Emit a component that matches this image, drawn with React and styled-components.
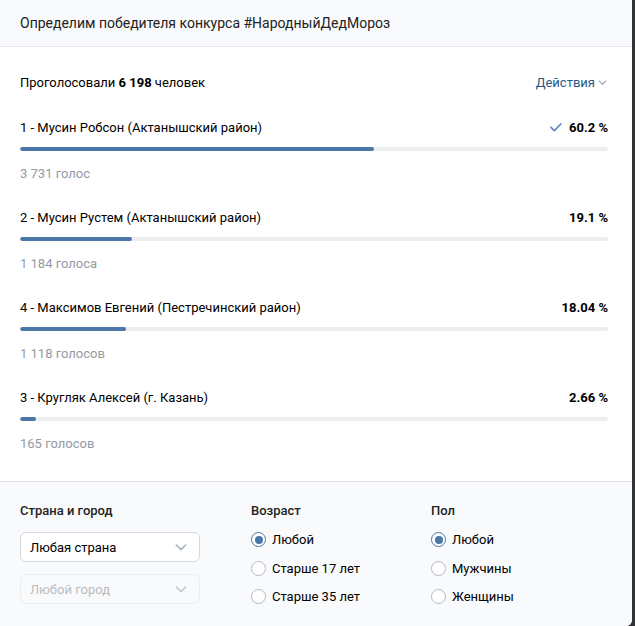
import React from 'react';
import styled, { createGlobalStyle } from 'styled-components';

const GlobalStyle = createGlobalStyle`
	body {
		margin: 0;
		background: #333436;
		font-family: Roboto, 'Liberation Sans', sans-serif;
		-webkit-font-smoothing: antialiased;
	}
`;

const answers = [
	{ title: '1 - Мусин Робсон (Актанышский район)', percent: 60.2, votes: '3 731 голос', mine: true },
	{ title: '2 - Мусин Рустем (Актанышский район)', percent: 19.1, votes: '1 184 голоса' },
	{ title: '4 - Максимов Евгений (Пестречинский район)', percent: 18.04, votes: '1 118 голосов' },
	{ title: '3 - Кругляк Алексей (г. Казань)', percent: 2.66, votes: '165 голосов' },
];

function Chevron({ color = '#99a2ad', size = 12 }) {
	return (
		<svg width={size} height={size} viewBox='0 0 12 12' fill='none'>
			<path d='M2.5 4.5 6 8l3.5-3.5' stroke={color} strokeWidth='1.3' strokeLinecap='round' strokeLinejoin='round' />
		</svg>
	);
}

function Check() {
	return (
		<svg width='14' height='14' viewBox='0 0 14 14' fill='none'>
			<path d='M2 7.4 5.4 10.6 12 3.8' stroke='#5c85b8' strokeWidth='1.6' strokeLinecap='round' strokeLinejoin='round' />
		</svg>
	);
}

function App() {
	return (
		<>
			<GlobalStyle />
			<Box>
				<Header>Определим победителя конкурса #НародныйДедМороз</Header>
				<Body>
					<Summary>
						<span>
							Проголосовали <b>6 198</b> человек
						</span>
						<Actions>
							Действия <Chevron size={11} />
						</Actions>
					</Summary>
					{answers.map((a) => (
						<Answer key={a.title}>
							<AnswerHead>
								<span>{a.title}</span>
								<Percent>
									{a.mine && <Check />}
									{a.percent} %
								</Percent>
							</AnswerHead>
							<Track>
								<Fill style={{ width: `${a.percent}%` }} />
							</Track>
							<Votes>{a.votes}</Votes>
						</Answer>
					))}
				</Body>
				<Filters>
					<Column>
						<Label>Страна и город</Label>
						<Select>
							Любая страна <Chevron color='#aeb7c2' size={16} />
						</Select>
						<Select disabled>
							Любой город <Chevron color='#c5cbd2' size={16} />
						</Select>
					</Column>
					<Column>
						<Label>Возраст</Label>
						<Radio checked>Любой</Radio>
						<Radio>Старше 17 лет</Radio>
						<Radio>Старше 35 лет</Radio>
					</Column>
					<Column>
						<Label>Пол</Label>
						<Radio checked>Любой</Radio>
						<Radio>Мужчины</Radio>
						<Radio>Женщины</Radio>
					</Column>
				</Filters>
			</Box>
		</>
	);
}

function Radio({ checked, children }) {
	return (
		<RadioRow>
			<Circle $checked={checked} />
			{children}
		</RadioRow>
	);
}

const Box = styled.div`
	width: 632px;
	height: 626px;
	background: #fff;
	border-bottom-right-radius: 6px;
	overflow: hidden;
	display: flex;
	flex-direction: column;
	color: #000;
	font-size: 13px;
`;

const Header = styled.div`
	height: 47px;
	box-sizing: border-box;
	padding: 0 20px;
	display: flex;
	align-items: center;
	background: #f9fafb;
	border-bottom: 1px solid #e7e8ec;
	font-size: 14px;
	color: #222;
`;

const Body = styled.div`
	padding: 26px 24px 0 20px;
	flex: 1;
`;

const Summary = styled.div`
	display: flex;
	justify-content: space-between;
	align-items: center;
	height: 18px;
	margin-bottom: 27px;

	b {
		font-weight: 700;
	}
`;

const Actions = styled.span`
	display: flex;
	align-items: center;
	gap: 2px;
	color: #2a5885;
`;

const Answer = styled.div`
	height: 90px;
`;

const AnswerHead = styled.div`
	display: flex;
	justify-content: space-between;
	align-items: center;
	height: 18px;
`;

const Percent = styled.span`
	display: flex;
	align-items: center;
	gap: 6px;
	font-weight: 700;
`;

const Track = styled.div`
	margin-top: 11px;
	height: 4px;
	border-radius: 2px;
	background: #edeef0;
	overflow: hidden;
`;

const Fill = styled.div`
	height: 100%;
	border-radius: 2px;
	background: #4a76a8;
`;

const Votes = styled.div`
	margin-top: 15px;
	color: #939aa3;
`;

const Filters = styled.div`
	height: 145px;
	box-sizing: border-box;
	padding: 21px 20px 0;
	background: #f9fafb;
	border-top: 1px solid #e2e4e8;
	display: grid;
	grid-template-columns: 231px 180px 1fr;
	align-items: start;
`;

const Column = styled.div`
	display: flex;
	flex-direction: column;
`;

const Label = styled.div`
	font-weight: 500;
	color: #222;
	height: 18px;
	margin-bottom: 11px;
`;

const Select = styled.div`
	width: 180px;
	height: 30px;
	box-sizing: border-box;
	padding: 0 10px 0 9px;
	display: flex;
	align-items: center;
	justify-content: space-between;
	border: 1px solid ${(p) => (p.disabled ? '#eceef1' : '#d3d9de')};
	border-radius: 6px;
	background: ${(p) => (p.disabled ? 'transparent' : '#fff')};
	color: ${(p) => (p.disabled ? '#b8bcc2' : '#000')};
	margin-bottom: 12px;
`;

const RadioRow = styled.div`
	display: flex;
	align-items: center;
	gap: 6px;
	height: 15px;
	margin-bottom: 13.5px;
`;

const Circle = styled.span`
	width: 15px;
	height: 15px;
	flex-shrink: 0;
	box-sizing: border-box;
	border-radius: 50%;
	border: ${(p) => (p.$checked ? '1.5px solid #4a76a8' : '1px solid #b2b9c3')};
	background: #fff;
	position: relative;

	&::after {
		content: '';
		display: ${(p) => (p.$checked ? 'block' : 'none')};
		position: absolute;
		inset: 2.5px;
		border-radius: 50%;
		background: #4a76a8;
	}
`;

export default App;
